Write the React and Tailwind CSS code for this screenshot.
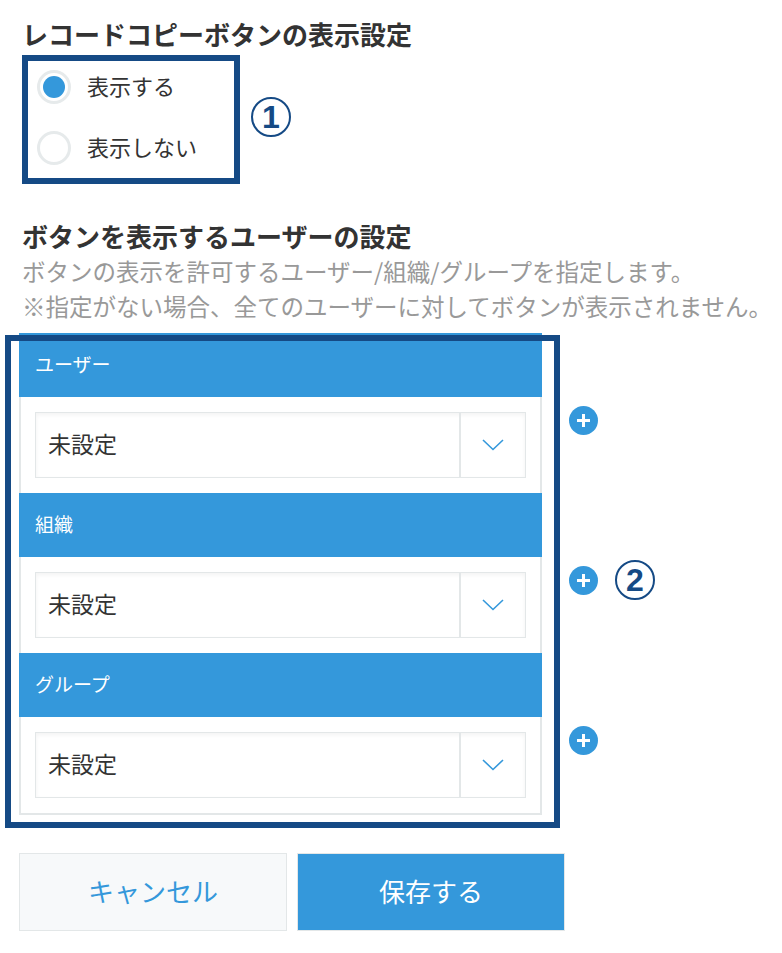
import React from "react";

const sections = ["ユーザー", "組織", "グループ"];

function Chevron() {
  return (
    <svg width="22" height="12" viewBox="0 0 22 12" fill="none">
      <path d="M1 1 L11 10.5 L21 1" stroke="#3498db" strokeWidth="1.6" />
    </svg>
  );
}

function PlusButton() {
  return (
    <div className="w-[29px] h-[29px] rounded-full bg-[#3498db] flex items-center justify-center">
      <svg width="15" height="15" viewBox="0 0 15 15">
        <path d="M7.5 1 V14 M1 7.5 H14" stroke="#fff" strokeWidth="3" />
      </svg>
    </div>
  );
}

function Radio({ checked, label }) {
  return (
    <div className="flex items-center h-[34px]">
      <div className="w-[34px] h-[34px] rounded-full border-[3px] border-[#e6eaeb] bg-white flex items-center justify-center">
        {checked && <div className="w-[22px] h-[22px] rounded-full bg-[#3498db]" />}
      </div>
      <span className="ml-[16px] mb-[5px] text-[22px] leading-[34px] text-[#333]">{label}</span>
    </div>
  );
}

function Section({ title }) {
  return (
    <div>
      <div className="h-[64px] bg-[#3498db] flex items-center px-[16px] pb-[2px] text-[19px] text-white">
        {title}
      </div>
      <div className="h-[96px] border-x-2 border-[#e3e7e8] px-[14px] pt-[15px]">
        <div className="h-[66px] flex border border-[#e3e7e8] bg-white shadow-[inset_0_2px_4px_rgba(0,0,0,0.05)]">
          <div className="flex-1 flex items-center pl-[12px] pb-[3px] text-[23px] text-[#333]">未設定</div>
          <div className="w-[66px] border-l-2 border-[#e3e7e8] flex items-center justify-center">
            <Chevron />
          </div>
        </div>
      </div>
    </div>
  );
}

export default function App() {
  return (
    <div className="relative w-[782px] h-[953px] bg-white font-['Noto_Sans_CJK_JP',sans-serif]">
      <div className="px-[19px] pt-[16px]">
        {/* Display setting */}
        <h2 className="ml-[3px] text-[26px] leading-[36px] font-bold text-[#333]">
          レコードコピーボタンの表示設定
        </h2>
        <div className="mt-[18px] ml-[18px] flex flex-col gap-[27px]">
          <Radio checked label="表示する" />
          <Radio label="表示しない" />
        </div>

        {/* User setting */}
        <h2 className="mt-[53px] ml-[3px] text-[26px] leading-[36px] font-bold text-[#333]">
          ボタンを表示するユーザーの設定
        </h2>
        <p className="ml-[3px] text-[23.5px] leading-[35px] text-[#999] whitespace-nowrap">
          ボタンの表示を許可するユーザー/組織/グループを指定します。
          <br />
          ※指定がない場合、全てのユーザーに対してボタンが表示されません。
        </p>

        <div className="mt-[9px] flex">
          <div className="w-[523px] border-b-2 border-[#e3e7e8]">
            {sections.map((s) => (
              <Section key={s} title={s} />
            ))}
          </div>
          <div className="ml-[27px] flex flex-col">
            {sections.map((s) => (
              <div key={s} className="h-[160px] pt-[73px]">
                <PlusButton />
              </div>
            ))}
          </div>
        </div>

        {/* Buttons */}
        <div className="mt-[38px] flex gap-[10px]">
          <button className="w-[268px] h-[78px] pb-[3px] bg-[#f7f9fa] border border-[#e3e7e8] text-[26px] text-[#3498db]">
            キャンセル
          </button>
          <button className="w-[268px] h-[78px] pb-[3px] bg-[#3498db] border border-[#e3e7e8] text-[26px] text-white">
            保存する
          </button>
        </div>
      </div>

      {/* Annotations */}
      <div className="absolute left-[22px] top-[55px] w-[218px] h-[129px] border-[6px] border-[#154a85]" />
      <div className="absolute left-[251px] top-[97px] w-[40px] h-[40px] rounded-full border-2 border-[#154a85] flex items-center justify-center text-[32px] font-bold leading-none text-[#154a85] font-['Liberation_Sans',sans-serif]">
        1
      </div>
      <div className="absolute left-[5px] top-[335px] w-[555px] h-[493px] border-[6px] border-[#154a85]" />
      <div className="absolute left-[615px] top-[560px] w-[40px] h-[40px] rounded-full border-2 border-[#154a85] flex items-center justify-center text-[32px] font-bold leading-none text-[#154a85] font-['Liberation_Sans',sans-serif]">
        2
      </div>
    </div>
  );
}
